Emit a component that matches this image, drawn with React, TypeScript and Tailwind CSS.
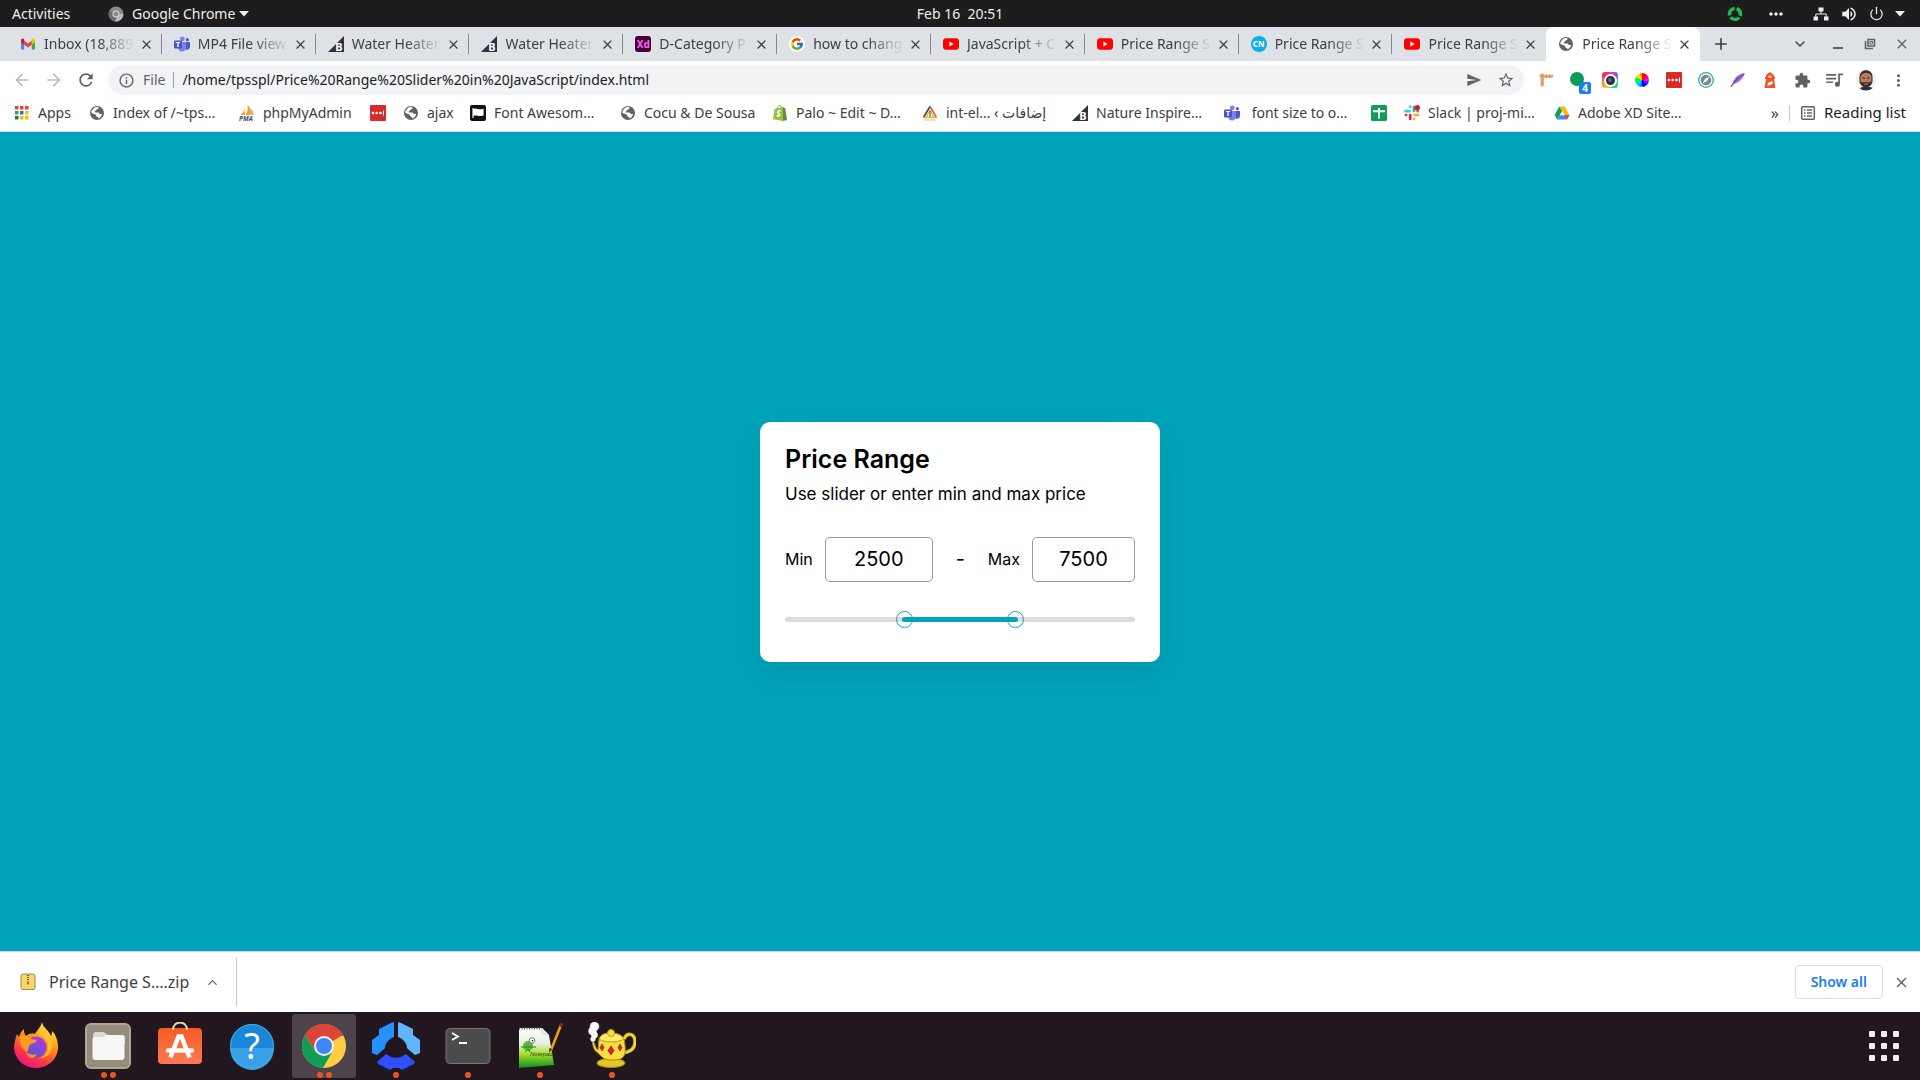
import { useState, type ReactNode } from "react";
import { FcGoogle } from "react-icons/fc";
import {
  MdArrowBack,
  MdArrowForward,
  MdClose,
  MdExtension,
  MdInfoOutline,
  MdMoreHoriz,
  MdMoreVert,
  MdRefresh,
  MdSend,
  MdStarBorder,
  MdVolumeUp,
} from "react-icons/md";
import { ChevronDown, ChevronUp, Plus, Power } from "lucide-react";

/* ---------- small icons (favicons, bookmarks) ---------- */

const Gmail = () => (
  <svg viewBox="0 0 16 16" className="size-4">
    <path d="M1 4v8.5c0 .5.4 1 1 1h2.2V7.2z" fill="#4285f4" />
    <path d="M15 4v8.5c0 .5-.4 1-1 1h-2.2V7.2z" fill="#34a853" />
    <path d="M4.2 4.6 8 7.5l3.800-2.900v4.100L8 11.500 4.200 8.700z" fill="#ea4335" />
    <path d="M1 4.200C1 2.700 2.600 2 3.700 2.900l.5.400v5.400L1 6.300z" fill="#c5221f" />
    <path d="M15 4.200c0-1.500-1.600-2.200-2.700-1.300l-.5.400v5.400L15 6.300z" fill="#fbbc04" />
  </svg>
);

const Teams = () => (
  <svg viewBox="0 0 16 16" className="size-4">
    <circle cx="8.300" cy="2.800" r="2.400" fill="#7b83eb" />
    <circle cx="13.400" cy="3.700" r="1.600" fill="#5059c9" />
    <path d="M11 6h5v5a3 3 0 0 1-5 2z" fill="#5059c9" />
    <path d="M4.500 6H12v5.500a4 4 0 0 1-7.500 2z" fill="#7b83eb" />
    <rect y="4.500" width="8" height="8" rx="1" fill="#4b53bc" />
    <text x="4" y="11.200" fontSize="7.500" fontWeight="bold" textAnchor="middle" fill="#fff">T</text>
  </svg>
);

const BigCommerce = () => (
  <svg viewBox="0 0 16 16" className="size-4">
    <path d="M16 0v16H0z" fill="#34313f" />
    <text x="10.800" y="14.500" fontSize="11" fontWeight="bold" textAnchor="middle" fill="#fff">B</text>
  </svg>
);

const AdobeXd = () => (
  <span className="flex size-4 items-center justify-center rounded-[3px] bg-[#470137] text-[10px] font-bold leading-none text-[#ff61f6]">
    Xd
  </span>
);

const Google = () => (
  <span className="flex size-4 items-center justify-center rounded-full bg-white">
    <FcGoogle size={14} />
  </span>
);

const YouTube = () => (
  <svg viewBox="0 0 16 16" className="size-4">
    <rect y="2.300" width="16" height="11.400" rx="3" fill="#f00" />
    <path d="m6.400 5.500 4.200 2.500-4.200 2.500z" fill="#fff" />
  </svg>
);

const CodingNepal = () => (
  <span className="flex size-4 items-center justify-center rounded-full bg-[#0eaee6] text-[8px] font-bold leading-none text-white">
    CN
  </span>
);

const Globe = () => (
  <svg viewBox="0 0 16 16" className="size-4">
    <circle cx="8" cy="8" r="7" fill="#5f6368" />
    <path
      d="M9.300 2.200c.6 1.500-.4 2-1.500 2.300-1 .3-.5 1.400-1.600 1.500-.9.100-.5 1.300.400 1.400h2.600c1.100.1.900 1.500 2 1.600h1.900c-.4 2-1.700 3.800-3.800 4.500.400-1.300-.400-1.600-1.400-1.800-1-.2-.5-1.700-1.500-2.200L2.400 8A5.700 5.700 0 0 1 9.300 2.200z"
      fill="#fff"
    />
  </svg>
);

const appDots = ["#ea4335", "#ea4335", "#ea4335", "#34a853", "#1a73e8", "#fbbc04", "#188038", "#fbbc04", "#fbbc04"];

const AppsGrid = () => (
  <svg viewBox="0 0 16 16" className="size-4">
    {appDots.map((fill, i) => (
      <rect key={i} x={1 + (i % 3) * 5} y={1 + Math.floor(i / 3) * 5} width="3.500" height="3.500" fill={fill} />
    ))}
  </svg>
);

const PhpMyAdmin = () => (
  <svg viewBox="0 0 16 16" className="size-4">
    <path d="M5 1c1 3 0 6-3.500 9H6zM8.500 0c3.500 3 4 7 3 10H6.500C9 7 9 3 8.500 0zM12 4c2 2 2.500 4 2.300 6h-2z" fill="#f89c2c" />
    <text x="0" y="15.500" fontSize="6.500" fontWeight="bold" fontStyle="italic" fill="#3b4a78">PMA</text>
  </svg>
);

const RedDots = () => (
  <svg viewBox="0 0 16 16" className="size-4">
    <rect width="16" height="16" rx="1" fill="#d92b2b" />
    <circle cx="2.900" cy="8" r="1.300" fill="#fff" />
    <circle cx="6.700" cy="8" r="1.300" fill="#fff" />
    <circle cx="10.500" cy="8" r="1.300" fill="#fff" />
    <path d="M13.500 5.500v5" stroke="#fff" />
  </svg>
);

const FontAwesome = () => (
  <svg viewBox="0 0 16 16" className="size-4">
    <rect width="16" height="16" rx="2" fill="#111" />
    <path d="M3 3v10M4 4.500c3-1.200 4 1.300 9 0v5.500c-4 1.500-6-1-9 0z" stroke="#fff" strokeWidth="1.200" fill="#fff" />
  </svg>
);

const Shopify = () => (
  <svg viewBox="0 0 16 16" className="size-4">
    <path d="M2.500 4 11 2v14L1 14.200z" fill="#95bf47" />
    <path d="m11 2 2.300 1.300L15 15l-4 1z" fill="#5e8e3e" />
    <path d="M5 4c.5-4 4-4.500 4.500-1" stroke="#7fa83c" fill="none" />
    <path d="M8.800 6c-4-.8-3.300 2.300-1.700 3 1.600 1-.1 2.900-2.300 1.500" stroke="#fff" strokeWidth="1.500" fill="none" />
  </svg>
);

const Pyramid = () => (
  <svg viewBox="0 0 16 16" className="size-4">
    <path d="M8 1.500 1.500 12.500" stroke="#3c3c4b" strokeWidth="1.500" />
    <path d="m8 1.500 6.500 11" stroke="#e7552c" strokeWidth="1.500" />
    <path d="M1.500 12.500h13M8 5l-3.500 7M8 5l3.500 7" stroke="#efb432" strokeWidth="1.300" fill="none" />
    <path d="M8 6v6" stroke="#3c3c4b" />
    <path d="M2 15h12" stroke="#aaa" strokeDasharray="2 1" />
  </svg>
);

const GreenPlus = () => (
  <svg viewBox="0 0 16 16" className="size-4">
    <rect width="16" height="16" rx="1.500" fill="#0f9d58" />
    <path d="M2 6.200h12M8 3v10.500" stroke="#fff" strokeWidth="2" />
  </svg>
);

const Slack = () => (
  <svg viewBox="0 0 16 16" className="size-4">
    <g strokeWidth="2.700" strokeLinecap="round">
      <path d="M1.600 6.200h3.700" stroke="#36c5f0" />
      <path d="M6.200 1.600v.1" stroke="#36c5f0" />
      <path d="M10 2v3.800M13.500 6.200h.500" stroke="#2eb67d" />
      <path d="M10.500 10h3.700M10 14v.100" stroke="#ecb22e" />
      <path d="M6.200 10.200v3.700M2 10h.100" stroke="#e01e5a" />
    </g>
    <circle cx="13.200" cy="2.700" r="2.700" fill="#e8102e" />
  </svg>
);

const Drive = () => (
  <svg viewBox="0 0 16 16" className="size-4">
    <path d="M5.300 1.500h5.400l4.800 8.700h-4.700z" fill="#fbbc04" />
    <path d="m5.300 1.500 2.700 4.700L3.200 14.500.6 10z" fill="#0f9d58" />
    <path d="M5.600 10.200h9.800l-2.700 4.300H3.200z" fill="#4285f4" />
    <path d="M10.800 10.200h4.700l-2.700 4.300z" fill="#ea4335" />
  </svg>
);

const ReadingIcon = () => (
  <svg viewBox="0 0 16 16" className="size-4" fill="none" stroke="#5f6368" strokeWidth="1.500">
    <rect x="1.700" y="1.700" width="12.600" height="12.600" rx="1" />
    <path d="M4 5h1.500M7 5h5M4 8h1.500M7 8h5M4 11h1.500M7 11h5" />
  </svg>
);

/* ---------- extensions ---------- */

const Ruler = () => (
  <svg viewBox="0 0 16 16" className="size-4">
    <path d="M2.500 14h7v1h-7z" fill="#eee5df" />
    <rect x="2.500" y="1.500" width="3.500" height="12.500" rx="1" fill="#e8aa7c" />
    <path d="M6 2.500h9V6H6z" fill="#f0b88c" />
    <path d="M1 4.200h14M4 2v12M8.500 3v3M11.500 3v3" stroke="#c98a5e" strokeWidth=".8" />
  </svg>
);

const Hangouts = () => (
  <span className="relative block size-4">
    <span className="block size-[14px] rounded-full bg-[#0b9d58]" />
    <span className="absolute left-[9px] top-[10px] flex size-3 items-center justify-center rounded-[2px] bg-[#1a80ee] text-[10px] font-bold leading-none text-white">
      4
    </span>
  </span>
);

const Camera = () => (
  <span className="flex size-4 items-center justify-center rounded-[3px] bg-[conic-gradient(#e83ea0,#9b4df0,#2fc9e2,#27cf72,#f7cd2b,#ff7a2f,#f5275e,#e83ea0)]">
    <span className="flex size-[13px] items-center justify-center rounded-full border-2 border-white bg-[#25303c]">
      <span className="size-1 rounded-full bg-[#5b6875]" />
    </span>
  </span>
);

const ColorWheel = () => (
  <span className="block size-[14px] rounded-full bg-[conic-gradient(#f00_0_45deg,#f08_0_75deg,#f0f_0_105deg,#80f_0_135deg,#00f_0_175deg,#08f_0_205deg,#0cf_0_235deg,#0e8_0_265deg,#2e0_0_290deg,#ae0_0_315deg,#fd0_0_340deg,#f80_0)]" />
);

const Compass = () => (
  <svg viewBox="0 0 16 16" className="size-4">
    <circle cx="8" cy="8" r="7.300" fill="#fff" stroke="#2ea7b8" strokeWidth="1.300" />
    <circle cx="8" cy="8" r="5.300" fill="#7b868b" />
    <path d="M11.500 4.500 9 9l-4.500 2.500L7 7z" fill="#fff" />
  </svg>
);

const Feather = () => (
  <svg viewBox="0 0 16 16" className="size-4">
    <path d="M15 1C8 2 3.500 6 2.500 12c5 0 10-4 12.500-11z" fill="#a778d4" />
    <path d="M1 15c3-5 7-9 13-13M4 9.500l2-.5M6 6.500l2.500 0" stroke="#7c3fae" strokeWidth="1.300" fill="none" />
  </svg>
);

const Lighthouse = () => (
  <svg viewBox="0 0 16 16" className="size-4">
    <path d="M4 5V3l4-3 4 3v2h1v2h-1l1.500 9h-11L4 7H3V5z" fill="#f0512d" />
    <path d="M6.500 3.500h3v2.500h-3z" fill="#ffd27e" />
    <path d="m5.800 11 4.600-2 .300 3-5.200 2z" fill="#fff" />
  </svg>
);

const PlaylistIcon = () => (
  <svg viewBox="0 0 16 16" className="size-[18px]" fill="none" stroke="#5f6368" strokeWidth="1.500">
    <path d="M1 3.500h9M1 6.800h9M1 10h6M16 3h-3.500v8.500" />
    <circle cx="11" cy="11.800" r="1.500" fill="#5f6368" />
  </svg>
);

const Avatar = () => (
  <svg viewBox="0 0 22 22" className="size-[22px]">
    <defs>
      <clipPath id="avatar">
        <circle cx="11" cy="11" r="10.500" />
      </clipPath>
    </defs>
    <g clipPath="url(#avatar)">
      <rect width="22" height="22" fill="#f3f1ed" />
      <path d="M3 22c1-3 3-4 5-4h6c3 0 5 1 6 4z" fill="#27334a" />
      <path d="M4.500 8c0-9 13-9 13 0v5c-2 7-11 7-13 0z" fill="#3a2720" />
      <path d="M5.500 7.500c1-5 10-5 11 0v5c-1 6-10 6-11 0z" fill="#b27d5e" />
      <path d="M5.500 12c1.500 2 3 1.300 5.500 1.300s4 .7 5.500-1.300c0 8.500-11 8.500-11 0z" fill="#3f2c24" />
      <path d="M9 15h4" stroke="#c08670" />
      <path d="M7.500 9h2.500M12 9h2.500" stroke="#35201a" />
    </g>
  </svg>
);

/* ---------- dock icons ---------- */

const Firefox = () => (
  <svg viewBox="0 0 48 48" className="size-12">
    <defs>
      <linearGradient id="ffBody" x1=".8" y1="0" x2=".3" y2="1">
        <stop offset="0" stopColor="#fff44f" />
        <stop offset=".4" stopColor="#ff980e" />
        <stop offset=".75" stopColor="#ff3647" />
        <stop offset="1" stopColor="#e31587" />
      </linearGradient>
      <linearGradient id="ffOrb" x1=".7" y1="0" x2=".3" y2="1">
        <stop offset="0" stopColor="#b833e1" />
        <stop offset="1" stopColor="#4a5cd6" />
      </linearGradient>
    </defs>
    <path
      d="M30 0c-1 5-5 8-7 12-4-1-7 0-9 2-2-2-2-5-2-7-3 2-4 5-5 8l-2-3C3 17 2 22 2 26c1 12 10 20 22 20s22-9 22-21c0-6-2-12-6-16 0 2 0 3-1 5-2-6-8-8-9-14z"
      fill="url(#ffBody)"
    />
    <circle cx="24" cy="25" r="10.500" fill="url(#ffOrb)" />
    <path d="M8 14c4-1 7 0 10 2 2 1 4 2 7 2-1 3-5 3-7 5-2 1-1 5-3 7-6-3-8-10-7-16z" fill="#ff9b1f" />
    <path d="M24 12c8 0 13 6 12 14-1 5-4 8-8 10 9 0 14-8 12-17-1-5-5-8-9-8-2 0-5 0-7 1z" fill="#ffc83a" opacity=".8" />
    <path d="M14 30c3 3 9 3 11 2-3 6-9 5-11-2z" fill="#ff8a2a" />
  </svg>
);

const Files = () => (
  <svg viewBox="0 0 48 48" className="size-12">
    <rect x="2" y="2" width="44" height="44" rx="5" fill="#958c7b" stroke="#aea793" strokeWidth="2" />
    <path d="M9 14c0-3 1-4 3-4h7c3 0 2 3 6 3h12c3 0 4 1 4 3v6H9z" fill="#ded9d1" />
    <path d="M8.500 17c0-1 1-2 2-2h8c3 0 2-2 5-2h14c2 0 3 1 3 3v19c0 2-1 3-3 3h-26c-2 0-3-1-3-3z" fill="#f8f7f5" />
  </svg>
);

const Software = () => (
  <svg viewBox="0 0 48 48" className="size-12">
    <defs>
      <linearGradient id="bag" x1="0" y1="0" x2="0" y2="1">
        <stop offset="0" stopColor="#f65b24" />
        <stop offset="1" stopColor="#ff7951" />
      </linearGradient>
    </defs>
    <rect x="2" y="6" width="44" height="36" rx="4" fill="url(#bag)" />
    <path d="M17 8c0-10 14-10 14 0" fill="none" stroke="#f3d7a6" strokeWidth="2" />
    <path d="m14.500 35.500 8-21h3l8 21" fill="none" stroke="#fff" strokeWidth="4.500" />
    <path d="M12 28.500h24" stroke="#fff" strokeWidth="4.500" strokeLinecap="round" />
  </svg>
);

const Help = () => (
  <svg viewBox="0 0 48 48" className="size-12">
    <circle cx="24" cy="24" r="22" fill="#1986d8" />
    <path d="M2 26h44a22 22 0 0 1-44 0z" fill="#38a0e4" />
    <circle cx="24" cy="24" r="21.500" fill="none" stroke="#49a9ea" />
    <text x="24" y="37" fontSize="36" textAnchor="middle" fill="#fff">?</text>
  </svg>
);

const Chrome = () => (
  <svg viewBox="0 0 48 48" className="size-12">
    <circle cx="24" cy="24" r="22" fill="#ffcd40" />
    <path d="M24 24 4.950 13A22 22 0 0 1 43.050 13z" fill="#db4437" />
    <path d="M24 14h19.600A22 22 0 0 0 4.950 13L15.300 29z" fill="#db4437" />
    <path d="M4.950 13A22 22 0 0 0 23 46l9.700-17L24 34l-8.700-5z" fill="#0f9d58" />
    <circle cx="24" cy="24" r="10" fill="#f1f1f1" />
    <circle cx="24" cy="24" r="8" fill="#4285f4" />
  </svg>
);

const Hubstaff = () => (
  <svg viewBox="0 0 48 48" className="size-12">
    <path d="m21 0 1 1v14c-5 2-9 6-9 11l-1 1-7 6-5-2V18l7-5V7z" fill="#2491ff" />
    <path d="m27 0-1 1v14c5 2 9 6 9 11l1 1 7 6 5-2V18l-7-5V7z" fill="#5fb6ff" />
    <path d="m14 32-9 8 1 2 12 6 3-2h6l3 2 12-6 1-2-9-8-5 3c-3 1-7 1-10 0z" fill="#2d50ff" />
  </svg>
);

const Terminal = () => (
  <svg viewBox="0 0 48 48" className="size-12">
    <rect x="2" y="6.500" width="44" height="35" rx="4" fill="#4b4b4b" stroke="#777" />
    <path d="m8 11 6 3.500L8 18M15 21h8" fill="none" stroke="#fff" strokeWidth="1.800" />
  </svg>
);

const Notepad = () => (
  <svg viewBox="0 0 48 48" className="size-12">
    <defs>
      <linearGradient id="sheet" x1="0" y1="0" x2="0" y2="1">
        <stop offset="0" stopColor="#fff" />
        <stop offset=".4" stopColor="#e6eedc" />
        <stop offset=".65" stopColor="#a6df2c" />
        <stop offset="1" stopColor="#0c8f23" />
      </linearGradient>
    </defs>
    <path d="M3 6h23l7 7 5 30-35 3z" fill="url(#sheet)" />
    <path d="M3 6.500h22" stroke="#555" strokeWidth="2" strokeDasharray="1 1.500" />
    <path d="m26 6 7 7-7-2z" fill="#fff" stroke="#999" strokeWidth=".5" />
    <circle cx="12" cy="24" r="5" fill="#57b83b" />
    <circle cx="16" cy="18.500" r="2.800" fill="#fff" stroke="#444" strokeWidth=".7" />
    <circle cx="16.500" cy="18.500" r=".8" fill="#222" />
    <path d="M5 25h15M9 30l3-3 2 3" stroke="#2c7d24" fill="none" />
    <text x="14" y="34" fontSize="6" fontFamily="Liberation Sans" fontStyle="italic" fill="#2d4a0e">Notepad</text>
    <path d="M45 3 35 28" stroke="#f2a11d" strokeWidth="2.500" />
    <path d="m46 1-1.500 4" stroke="#8c2929" strokeWidth="2.500" />
    <path d="m36 27-3 4 .500-5z" fill="#33220a" />
  </svg>
);

const Teapot = () => (
  <svg viewBox="0 0 48 48" className="size-12">
    <path d="M36 17c3-7 11-6 11 3 0 7-5 10-12 11" fill="none" stroke="#b99b18" strokeWidth="3.600" />
    <path d="M36 17c3-7 11-6 11 3 0 7-5 10-12 11" fill="none" stroke="#f2da38" strokeWidth="2.200" />
    <ellipse cx="23" cy="41" rx="14" ry="4.500" fill="#e5c628" stroke="#a68914" />
    <path d="M4 19c3 0 3 8 6 9l1-11h25c4 20-2 21-13 21-9 0-10-5-13-7-5-3-5-8-6-12z" fill="#f6df3f" stroke="#a68914" />
    <path d="M11 17c2-5 6-6 12-6s11 2 13 6c-5 4-20 4-25 0z" fill="#fbea69" stroke="#b99b18" />
    <circle cx="23" cy="11" r="3.500" fill="#f6df3f" stroke="#b99b18" />
    <path d="m23 24 3 4.500-3 4.500-3-4.500zM14 22l2 3.500-2 3.500-2-3.500zM32 22l2 3.500-2 3.500-2-3.500z" fill="#d6202c" stroke="#8c1119" strokeWidth=".6" />
    <g fill="#f8f8f8" stroke="#ddd" strokeWidth=".4">
      <circle cx="5" cy="17" r="2.500" />
      <circle cx="6.500" cy="13" r="3.200" />
      <circle cx="4.500" cy="9" r="4" />
      <circle cx="6.500" cy="4.500" r="4.500" />
    </g>
  </svg>
);

/* ---------- data ---------- */

type Tab = { icon: ReactNode; title: string };

const tabs: Tab[] = [
  { icon: <Gmail />, title: "Inbox (18,889" },
  { icon: <Teams />, title: "MP4 File view" },
  { icon: <BigCommerce />, title: "Water Heater" },
  { icon: <BigCommerce />, title: "Water Heater" },
  { icon: <AdobeXd />, title: "D-Category P" },
  { icon: <Google />, title: "how to chang" },
  { icon: <YouTube />, title: "JavaScript + C" },
  { icon: <YouTube />, title: "Price Range S" },
  { icon: <CodingNepal />, title: "Price Range S" },
  { icon: <YouTube />, title: "Price Range S" },
  { icon: <Globe />, title: "Price Range S" },
];

const bookmarks = [
  { icon: <AppsGrid />, label: "Apps", width: "w-[75px]" },
  { icon: <Globe />, label: "Index of /~tps…", width: "w-[150px]" },
  { icon: <PhpMyAdmin />, label: "phpMyAdmin", width: "w-[131px]" },
  { icon: <RedDots />, label: "", width: "w-[33px]" },
  { icon: <Globe />, label: "ajax", width: "w-[67px]" },
  { icon: <FontAwesome />, label: "Font Awesom…", width: "w-[150px]" },
  { icon: <Globe />, label: "Cocu & De Sousa", width: "w-[152px]" },
  { icon: <Shopify />, label: "Palo ~ Edit ~ D…", width: "w-[150px]" },
  { icon: <Pyramid />, label: "int-el… ‹ إضافات", width: "w-[150px]" },
  { icon: <BigCommerce />, label: "Nature Inspire…", width: "w-[152px]" },
  { icon: <Teams />, label: " font size to o…", width: "w-[147px]" },
  { icon: <GreenPlus />, label: "", width: "w-[33px]" },
  { icon: <Slack />, label: "Slack | proj-mi…", width: "w-[150px]" },
  { icon: <Drive />, label: "Adobe XD Site…", width: "w-[150px]" },
];

const extensions = [
  { name: "Page ruler", icon: <Ruler /> },
  { name: "Hangouts", icon: <Hangouts /> },
  { name: "Screenshot", icon: <Camera /> },
  { name: "Color picker", icon: <ColorWheel /> },
  { name: "Password manager", icon: <RedDots /> },
  { name: "Compass", icon: <Compass /> },
  { name: "Feather", icon: <Feather /> },
  { name: "Lighthouse", icon: <Lighthouse /> },
  { name: "Extensions", icon: <MdExtension size={17} /> },
  { name: "Media", icon: <PlaylistIcon /> },
  { name: "Profile", icon: <Avatar /> },
  { name: "Menu", icon: <MdMoreVert size={19} /> },
];

const dock = [
  { name: "Firefox", icon: <Firefox />, windows: 0 },
  { name: "Files", icon: <Files />, windows: 2 },
  { name: "Ubuntu Software", icon: <Software />, windows: 0 },
  { name: "Help", icon: <Help />, windows: 0 },
  { name: "Google Chrome", icon: <Chrome />, windows: 2, active: true },
  { name: "Hubstaff", icon: <Hubstaff />, windows: 1 },
  { name: "Terminal", icon: <Terminal />, windows: 1 },
  { name: "Notepad++", icon: <Notepad />, windows: 1 },
  { name: "Teapot", icon: <Teapot />, windows: 1 },
];

/* ---------- page parts ---------- */

function TopBar() {
  return (
    <header className="grid h-[27px] grid-cols-3 items-center bg-[#1d1d1d] text-sm text-[#eee]">
      <div className="flex items-center pl-3">
        <button className="w-24 text-left">Activities</button>
        <button className="flex items-center gap-2">
          <svg viewBox="0 0 16 16" className="size-4">
            <circle cx="8" cy="8" r="7.500" fill="#8b8b8b" />
            <path d="M8 8h7.500A7.500 7.500 0 0 1 7 15.400z" fill="#b9b9b9" />
            <path d="M1.500 4.300A7.500 7.500 0 0 0 7 15.400L9.500 9z" fill="#6c6c6c" />
            <circle cx="8" cy="8" r="3.500" fill="#dadada" />
            <circle cx="8" cy="8" r="2.500" fill="#8c8c8c" />
          </svg>
          Google Chrome
          <svg viewBox="0 0 10 6" className="-ml-1 h-[6px] w-[10px]">
            <path d="M0 0h10L5 5.500z" fill="#eee" />
          </svg>
        </button>
      </div>
      <time className="whitespace-pre text-center">Feb 16  20:51</time>
      <div className="flex items-center justify-end gap-[11px] pr-[15px]">
        <svg viewBox="0 0 16 16" className="mr-3 size-4" fill="none" stroke="#1db954" strokeWidth="3.600">
          <circle cx="8" cy="8" r="5.500" strokeDasharray="9.500 2.020" strokeDashoffset="-3.900" />
        </svg>
        <MdMoreHoriz size={20} className="mr-4" />
        <svg viewBox="0 0 16 16" className="size-4" fill="#eee">
          <path d="M5.500 1.500h5v4h-5zM0.500 10.500h4.500v4H.5zM11 10.500h4.500v4H11z" />
          <path d="M8 5v3M2.800 11V8h10.400v3" fill="none" stroke="#eee" />
        </svg>
        <MdVolumeUp size={18} />
        <Power size={15} strokeWidth={2} />
        <svg viewBox="0 0 10 6" className="h-[6px] w-[10px]">
          <path d="M0 0h10L5 5.500z" fill="#eee" />
        </svg>
      </div>
    </header>
  );
}

function TabStrip() {
  return (
    <div className="flex h-[34px] items-stretch justify-between bg-[#dee1e6] pl-2 text-[#3c4043]">
      <div className="flex w-[88.5%]" role="tablist">
        {tabs.map((tab, i) => {
          const active = i === tabs.length - 1;
          const divided = i < tabs.length - 2;
          return (
            <div
              key={i}
              role="tab"
              aria-selected={active}
              className={`flex min-w-0 flex-1 items-center ${active ? "rounded-t-lg bg-white" : ""}`}
            >
              <span className="ml-3 shrink-0">{tab.icon}</span>
              <span className="ml-2 min-w-0 flex-1 whitespace-nowrap text-sm [mask-image:linear-gradient(to_right,black_60%,transparent)]">
                {tab.title}
              </span>
              <button aria-label="Close tab" className="ml-1 mr-[7px] shrink-0">
                <MdClose size={15} />
              </button>
              <span className={`h-5 w-px shrink-0 ${divided ? "bg-[#85888c]" : ""}`} />
            </div>
          );
        })}
      </div>
      <button aria-label="New tab" className="ml-3">
        <Plus size={18} strokeWidth={2.200} />
      </button>
      <div className="ml-auto flex items-center pr-[2px] text-[#5f6368]">
        <button aria-label="Search tabs" className="mr-1 flex w-9 justify-center text-[#3c4043]">
          <ChevronDown size={16} />
        </button>
        <button aria-label="Minimize" className="flex w-8 justify-center">
          <svg viewBox="0 0 12 12" className="size-3">
            <path d="M1 10h10" stroke="currentColor" strokeWidth="2" />
          </svg>
        </button>
        <button aria-label="Restore" className="flex w-8 justify-center">
          <svg viewBox="0 0 12 12" className="size-3" fill="none" stroke="currentColor" strokeWidth="1.600">
            <path d="M4 1.500h6.500V8H4zM1.500 3v7.500H9" />
            <path d="M6 3.500h2.500V6H6z" strokeWidth="1" />
          </svg>
        </button>
        <button aria-label="Close window" className="flex w-8 justify-center">
          <MdClose size={16} />
        </button>
      </div>
    </div>
  );
}

function Toolbar() {
  return (
    <div className="flex h-[38px] items-center bg-white pl-[6px] pr-[6px] text-[#5f6368]">
      <button aria-label="Back" className="flex w-8 justify-center text-[#babcbe]">
        <MdArrowBack size={20} />
      </button>
      <button aria-label="Forward" className="flex w-8 justify-center text-[#babcbe]">
        <MdArrowForward size={20} />
      </button>
      <button aria-label="Reload" className="flex w-8 justify-center">
        <MdRefresh size={20} />
      </button>
      <div className="ml-[6px] mr-[6px] flex h-[30px] flex-1 items-center rounded-full bg-[#f1f3f4] pl-[10px] pr-[2px] text-sm">
        <MdInfoOutline size={17} />
        <label htmlFor="address" className="ml-2 text-[#5f6368]">
          File
        </label>
        <span className="mx-2 h-4 w-px bg-[#9aa0a6]" />
        <input
          id="address"
          className="min-w-0 flex-1 bg-transparent text-[#202124] outline-none"
          defaultValue="/home/tpsspl/Price%20Range%20Slider%20in%20JavaScript/index.html"
        />
        <button aria-label="Share" className="flex w-8 justify-center">
          <MdSend size={16} />
        </button>
        <button aria-label="Bookmark" className="flex w-8 justify-center">
          <MdStarBorder size={18} />
        </button>
      </div>
      {extensions.map((ext) => (
        <button key={ext.name} aria-label={ext.name} className="flex w-8 justify-center">
          {ext.icon}
        </button>
      ))}
    </div>
  );
}

function BookmarksBar() {
  return (
    <nav className="flex h-[33px] items-center border-b border-[#dadce0] bg-white pb-1 pl-[14px] pr-[14px] text-sm text-[#3c4043]">
      {bookmarks.map((mark, i) => (
        <a key={i} href="#" aria-label={mark.label || "Bookmark"} className={`flex items-center gap-2 whitespace-pre ${mark.width}`}>
          {mark.icon}
          {mark.label}
        </a>
      ))}
      <button aria-label="More bookmarks" className="ml-auto text-base leading-none">
        »
      </button>
      <span className="mx-[10px] h-4 w-px bg-[#c4c7ca]" />
      <button className="flex items-center gap-2 text-[15px] text-[#202124]">
        <ReadingIcon />
        Reading list
      </button>
    </nav>
  );
}

const thumb =
  "pointer-events-none absolute inset-x-0 -top-[6px] h-[17px] w-full appearance-none bg-transparent outline-none [&::-webkit-slider-thumb]:pointer-events-auto [&::-webkit-slider-thumb]:size-[17px] [&::-webkit-slider-thumb]:appearance-none [&::-webkit-slider-thumb]:rounded-full [&::-webkit-slider-thumb]:border [&::-webkit-slider-thumb]:border-[#17a2b8]";

const rangeMin = -2500;
const rangeMax = 12500;

function PriceRange() {
  const [min, setMin] = useState(2500);
  const [max, setMax] = useState(7500);

  const toPercent = (value: number) => ((value - rangeMin) / (rangeMax - rangeMin)) * 100;

  return (
    <main className="flex flex-1 items-center justify-center bg-[#00a4bb] font-[Inter,sans-serif] text-black">
      <section className="w-[400px] rounded-[10px] bg-white px-[25px] pb-10 pt-5 shadow-[0_12px_35px_rgba(0,0,0,0.1)]">
        <h2 className="text-[25px] font-semibold leading-[34px]">Price Range</h2>
        <p className="mt-[6px] text-[17px] leading-6">Use slider or enter min and max price</p>

        <div className="mb-[35px] mt-[31px] flex h-[45px] items-center text-base">
          <label htmlFor="min">Min</label>
          <input
            id="min"
            inputMode="numeric"
            value={min}
            onChange={(e) => setMin(Number(e.target.value) || 0)}
            className="ml-3 h-full w-[108px] rounded-[5px] border border-[#999] text-center text-[20px] outline-none"
          />
          <span className="flex-1 text-center text-[20px]">-</span>
          <label htmlFor="max">Max</label>
          <input
            id="max"
            inputMode="numeric"
            value={max}
            onChange={(e) => setMax(Number(e.target.value) || 0)}
            className="ml-3 h-full w-[103px] rounded-[5px] border border-[#999] text-center text-[20px] outline-none"
          />
        </div>

        <div className="relative h-[5px] rounded-[5px] bg-[#ddd]">
          <div
            className="absolute h-full rounded-[5px] bg-[#00a4bb]"
            style={{ left: `${toPercent(min)}%`, right: `${100 - toPercent(max)}%` }}
          />
          <input
            type="range"
            aria-label="Minimum price"
            min={rangeMin}
            max={rangeMax}
            step={100}
            value={min}
            onChange={(e) => setMin(Math.min(Number(e.target.value), max))}
            className={thumb}
          />
          <input
            type="range"
            aria-label="Maximum price"
            min={rangeMin}
            max={rangeMax}
            step={100}
            value={max}
            onChange={(e) => setMax(Math.max(Number(e.target.value), min))}
            className={thumb}
          />
        </div>
      </section>
    </main>
  );
}

function DownloadBar() {
  return (
    <div className="flex h-[61px] items-center border-t border-[#cfd1d4] bg-white px-5 text-[#3c4043]">
      <svg viewBox="0 0 16 18" className="h-[18px] w-4">
        <rect x="1" y="1" width="14" height="15.500" rx="2" fill="#fbd468" stroke="#9c8654" />
        <path d="M8 2v5" stroke="#6b5b2b" strokeWidth="2" strokeDasharray="1 1" />
        <path d="M7 8.500h2v3H7z" fill="#8d7637" />
      </svg>
      <button className="ml-[13px] text-base">Price Range S….zip</button>
      <button aria-label="Download options" className="ml-4 text-[#5f6368]">
        <ChevronUp size={15} />
      </button>
      <span className="ml-4 h-12 w-px bg-[#c4c7ca]" />
      <button className="ml-auto h-[34px] rounded border border-[#dadce0] px-[15px] text-sm font-semibold text-[#1a80ee]">
        Show all
      </button>
      <button aria-label="Close downloads" className="-mr-[10px] ml-[10px] text-[#5f6368]">
        <MdClose size={17} />
      </button>
    </div>
  );
}

function Dock() {
  return (
    <footer className="flex h-[68px] items-center justify-between bg-[#22161f]">
      <div className="flex gap-2 pl-1">
        {dock.map((app) => (
          <button
            key={app.name}
            aria-label={app.name}
            className={`relative flex size-16 items-center justify-center rounded-[3px] ${app.active ? "bg-[#4d434b]" : ""}`}
          >
            {app.icon}
            <span className="absolute inset-x-0 bottom-0 flex justify-center gap-[3px]">
              {Array.from({ length: app.windows }, (_, i) => (
                <span key={i} className="size-[6px] rounded-full bg-[#e95420]" />
              ))}
            </span>
          </button>
        ))}
      </div>
      <button aria-label="Show applications" className="mr-[21px] grid grid-cols-3 gap-[6px]">
        {Array.from({ length: 9 }, (_, i) => (
          <span key={i} className="size-[6px] rounded-[1px] bg-[#f0eeeb]" />
        ))}
      </button>
    </footer>
  );
}

export default function App() {
  return (
    <div className="flex min-h-screen flex-col font-['Noto_Sans','DejaVu_Sans',sans-serif]">
      <TopBar />
      <TabStrip />
      <Toolbar />
      <BookmarksBar />
      <PriceRange />
      <DownloadBar />
      <Dock />
    </div>
  );
}
